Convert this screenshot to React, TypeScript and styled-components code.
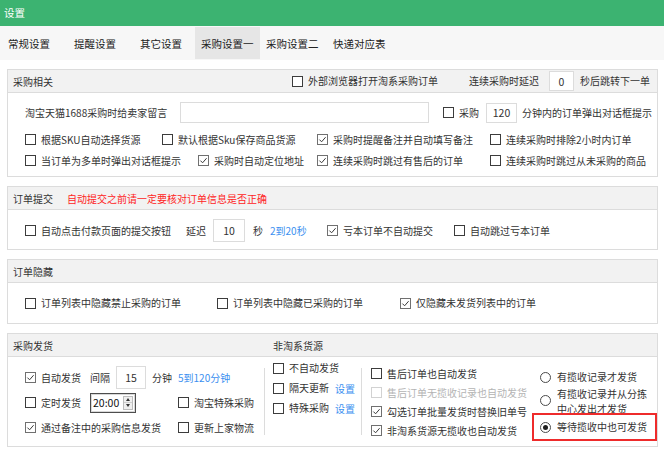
import React from 'react';
import styled, { createGlobalStyle } from 'styled-components';

const GlobalStyle = createGlobalStyle`
  html, body {
    margin: 0;
    padding: 0;
    background: #ffffff;
  }
  body {
    font-family: "Noto Sans CJK SC", "Microsoft YaHei", sans-serif;
    font-size: 10px;
    color: #333333;
  }
`;

const Window = styled.div`
  width: 664px;
  height: 449px;
  overflow: hidden;
  background: #ffffff;
  display: flex;
  flex-direction: column;
`;

const TitleBar = styled.div`
  height: 26px;
  flex: none;
  background: #3cb371;
  color: #ffffff;
  font-size: 10.5px;
  line-height: 26px;
  padding-left: 4px;
`;

const TabBar = styled.div`
  height: 34px;
  flex: none;
  background: #f7f7f7;
  display: flex;
  padding-left: 2px;
`;

const Tab = styled.div<{ $w: number; $active?: boolean }>`
  width: ${(p) => p.$w}px;
  box-sizing: border-box;
  padding-left: 6px;
  margin: 1px 0;
  display: flex;
  align-items: center;
  font-size: 10.5px;
  color: #222222;
  background: ${(p) => (p.$active ? '#e6e6e6' : 'transparent')};
`;

const Content = styled.div`
  display: flex;
  flex-direction: column;
  gap: 9px;
  padding: 9px 6px 0 7px;
`;

const Section = styled.div`
  border: 1px solid #dcdcdc;
  background: #ffffff;
`;

const Header = styled.div`
  height: 22px;
  background: #f2f2f2;
  border-bottom: 1px solid #dcdcdc;
  display: flex;
  align-items: center;
  padding-left: 5px;
  padding-right: 7px;
  color: #333333;
`;

const HeaderTitle = styled.span<{ $w?: number }>`
  width: ${(p) => (p.$w ? `${p.$w}px` : 'auto')};
  flex: none;
`;

const HeaderRight = styled.div`
  margin-left: auto;
  display: flex;
  align-items: center;
`;

const Warn = styled.span`
  color: #ff2424;
  margin-left: 14px;
`;

const Body = styled.div<{ $pt: number; $pb: number }>`
  display: flex;
  flex-direction: column;
  padding: ${(p) => p.$pt}px 0 ${(p) => p.$pb}px 17px;
`;

const Row = styled.div<{ $h: number; $mt?: number }>`
  height: ${(p) => p.$h}px;
  margin-top: ${(p) => p.$mt ?? 0}px;
  display: flex;
  align-items: center;
  white-space: nowrap;
`;

const Cell = styled.div<{ $w?: number; $ml?: number }>`
  width: ${(p) => (p.$w ? `${p.$w}px` : 'auto')};
  margin-left: ${(p) => p.$ml ?? 0}px;
  flex: none;
  display: flex;
  align-items: center;
  white-space: nowrap;
`;

const Label = styled.span<{ $ml?: number; $disabled?: boolean }>`
  margin-left: ${(p) => p.$ml ?? 0}px;
  color: ${(p) => (p.$disabled ? '#b4b4b4' : '#333333')};
  line-height: 14px;
`;

const LinkText = styled.span<{ $ml?: number }>`
  margin-left: ${(p) => p.$ml ?? 0}px;
  color: #3b8ff0;
`;

const Field = styled.input<{ $w: number; $h: number; $ml?: number }>`
  width: ${(p) => p.$w}px;
  height: ${(p) => p.$h}px;
  margin: 0 0 0 ${(p) => p.$ml ?? 0}px;
  padding: 0;
  box-sizing: border-box;
  border: 1px solid #dcdcdc;
  background: #ffffff;
  font-family: inherit;
  font-size: 10.5px;
  color: #333333;
  text-align: center;
  outline: none;
  flex: none;
`;

const BoxMark = styled.span<{ $checked?: boolean; $disabled?: boolean }>`
  width: 11px;
  height: 11px;
  flex: none;
  box-sizing: border-box;
  border: 1px solid
    ${(p) => (p.$disabled ? '#d2d2d2' : p.$checked ? '#707070' : '#3c3c3c')};
  background: #ffffff;
  display: inline-flex;
  align-items: center;
  justify-content: center;
`;

const RadioMark = styled.span<{ $checked?: boolean; $mt?: number }>`
  width: 11px;
  height: 11px;
  flex: none;
  box-sizing: border-box;
  border-radius: 50%;
  border: 1px solid #4a4a4a;
  background: #ffffff;
  margin-top: ${(p) => p.$mt ?? 0}px;
  display: inline-flex;
  align-items: center;
  justify-content: center;
  &::after {
    content: '';
    display: ${(p) => (p.$checked ? 'block' : 'none')};
    width: 5px;
    height: 5px;
    border-radius: 50%;
    background: #1e1e1e;
  }
`;

type CheckProps = {
  label: string;
  checked?: boolean;
  disabled?: boolean;
  w?: number;
  ml?: number;
  children?: React.ReactNode;
};

const Check: React.FC<CheckProps> = ({ label, checked, disabled, w, ml, children }) => (
  <Cell $w={w} $ml={ml}>
    <BoxMark $checked={checked} $disabled={disabled}>
      {checked && (
        <svg width="9" height="9" viewBox="0 0 9 9">
          <path d="M1.4 4.6 L3.6 6.8 L7.6 2.2" fill="none" stroke="#3a3a3a" strokeWidth="1" />
        </svg>
      )}
    </BoxMark>
    <Label $ml={5} $disabled={disabled}>
      {label}
    </Label>
    {children}
  </Cell>
);

/* 采购发货 columns */
const DeliveryBody = styled.div`
  height: 89px;
  display: flex;
  align-items: flex-start;
  padding-left: 17px;
`;

const Column = styled.div<{ $w?: number; $pt: number; $ml?: number }>`
  width: ${(p) => (p.$w ? `${p.$w}px` : 'auto')};
  flex: ${(p) => (p.$w ? 'none' : '1')};
  margin-left: ${(p) => p.$ml ?? 0}px;
  padding-top: ${(p) => p.$pt}px;
  display: flex;
  flex-direction: column;
`;

const Divider = styled.div<{ $ml: number }>`
  width: 1px;
  height: 67px;
  margin-top: 11px;
  margin-left: ${(p) => p.$ml}px;
  background: #dcdcdc;
  flex: none;
`;

const TimeBox = styled.div`
  width: 46px;
  height: 20px;
  box-sizing: border-box;
  border: 1px solid #4d4d4d;
  box-shadow: inset 0 0 0 1px #d8d8d8;
  display: flex;
  align-items: center;
  padding-left: 2px;
  font-size: 10.5px;
  color: #111111;
  flex: none;
`;

const Spin = styled.div`
  margin-left: auto;
  margin-right: 2px;
  width: 10px;
  height: 14px;
  display: flex;
  flex-direction: column;
  border: 1px solid #bdbdbd;
  background: #efefef;
  box-sizing: border-box;
`;

const SpinHalf = styled.div<{ $down?: boolean }>`
  flex: 1;
  display: flex;
  align-items: center;
  justify-content: center;
  border-top: ${(p) => (p.$down ? '1px solid #cfcfcf' : 'none')};
  &::after {
    content: '';
    border-left: 2.5px solid transparent;
    border-right: 2.5px solid transparent;
    ${(p) => (p.$down ? 'border-top: 3px solid #333;' : 'border-bottom: 3px solid #333;')}
  }
`;

const RadioRow = styled.div<{ $h: number }>`
  height: ${(p) => p.$h}px;
  display: flex;
  align-items: center;
`;

const RadioClip = styled.div`
  height: 26px;
  overflow: hidden;
  display: flex;
  align-items: flex-start;
`;

const WrapLabel = styled.span`
  width: 94px;
  margin-left: 6px;
  margin-top: -1px;
  line-height: 15px;
  color: #333333;
`;

const Highlight = styled.div`
  height: 28px;
  box-sizing: border-box;
  margin-left: -8px;
  padding-left: 6px;
  border: 2px solid #ee2b2b;
  display: flex;
  align-items: center;
`;

const tabs = [
  { name: '常规设置', w: 66 },
  { name: '提醒设置', w: 66 },
  { name: '其它设置', w: 61 },
  { name: '采购设置一', w: 65, active: true },
  { name: '采购设置二', w: 67 },
  { name: '快递对应表', w: 70 },
];

const App: React.FC = () => {
  return (
    <Window>
      <GlobalStyle />
      <TitleBar>设置</TitleBar>
      <TabBar>
        {tabs.map((t) => (
          <Tab key={t.name} $w={t.w} $active={t.active}>
            {t.name}
          </Tab>
        ))}
      </TabBar>

      <Content>
        <Section>
          <Header>
            <HeaderTitle>采购相关</HeaderTitle>
            <HeaderRight>
              <Check label="外部浏览器打开淘系采购订单" />
              <Label $ml={31}>连续采购时延迟</Label>
              <Field $w={25} $h={20} $ml={10} value="0" readOnly />
              <Label $ml={6}>秒后跳转下一单</Label>
            </HeaderRight>
          </Header>
          <Body $pt={9} $pb={5}>
            <Row $h={21}>
              <Cell $w={155}>
                <Label>淘宝天猫1688采购时给卖家留言</Label>
              </Cell>
              <Field $w={249} $h={21} value="" readOnly />
              <Check label="采购" ml={14} />
              <Field $w={31} $h={20} $ml={7} value="120" readOnly />
              <Label $ml={5}>分钟内的订单弹出对话框提示</Label>
            </Row>
            <Row $h={21} $mt={6}>
              <Check label="根据SKU自动选择货源" w={137} />
              <Check label="默认根据Sku保存商品货源" w={155} />
              <Check label="采购时提醒备注并自动填写备注" checked w={173} />
              <Check label="连续采购时排除2小时内订单" />
            </Row>
            <Row $h={21}>
              <Check label="当订单为多单时弹出对话框提示" w={173} />
              <Check label="采购时自动定位地址" checked w={119} />
              <Check label="连续采购时跳过有售后的订单" checked w={173} />
              <Check label="连续采购时跳过从未采购的商品" />
            </Row>
          </Body>
        </Section>

        <Section>
          <Header>
            <HeaderTitle>订单提交</HeaderTitle>
            <Warn>自动提交之前请一定要核对订单信息是否正确</Warn>
          </Header>
          <Body $pt={9} $pb={7}>
            <Row $h={23}>
              <Cell $w={302}>
                <Check label="自动点击付款页面的提交按钮" w={161} />
                <Label>延迟</Label>
                <Field $w={32} $h={23} $ml={7} value="10" readOnly />
                <Label $ml={8}>秒</Label>
                <LinkText $ml={7}>2到20秒</LinkText>
              </Cell>
              <Check label="亏本订单不自动提交" checked w={127} />
              <Check label="自动跳过亏本订单" />
            </Row>
          </Body>
        </Section>

        <Section>
          <Header>
            <HeaderTitle>订单隐藏</HeaderTitle>
          </Header>
          <Body $pt={10} $pb={10}>
            <Row $h={20}>
              <Check label="订单列表中隐藏禁止采购的订单" w={192} />
              <Check label="订单列表中隐藏已采购的订单" w={183} />
              <Check label="仅隐藏未发货列表中的订单" checked />
            </Row>
          </Body>
        </Section>

        <Section>
          <Header>
            <HeaderTitle $w={260}>采购发货</HeaderTitle>
            <HeaderTitle>非淘系货源</HeaderTitle>
          </Header>
          <DeliveryBody>
            <Column $w={233} $pt={8}>
              <Row $h={25}>
                <Check label="自动发货" checked w={65} />
                <Label>间隔</Label>
                <Field $w={30} $h={23} $ml={6} value="15" readOnly />
                <Label $ml={6}>分钟</Label>
                <LinkText $ml={6}>5到120分钟</LinkText>
              </Row>
              <Row $h={25}>
                <Cell $w={153}>
                  <Check label="定时发货" w={65} />
                  <TimeBox>
                    20:00
                    <Spin>
                      <SpinHalf />
                      <SpinHalf $down />
                    </Spin>
                  </TimeBox>
                </Cell>
                <Check label="淘宝特殊采购" />
              </Row>
              <Row $h={25}>
                <Check label="通过备注中的采购信息发货" checked w={153} />
                <Check label="更新上家物流" />
              </Row>
            </Column>

            <Divider $ml={6} />

            <Column $w={83} $ml={8} $pt={1}>
              <Row $h={20}>
                <Check label="不自动发货" />
              </Row>
              <Row $h={20}>
                <Check label="隔天更新">
                  <LinkText $ml={6}>设置</LinkText>
                </Check>
              </Row>
              <Row $h={20}>
                <Check label="特殊采购">
                  <LinkText $ml={6}>设置</LinkText>
                </Check>
              </Row>
            </Column>

            <Divider $ml={5} />

            <Column $w={160} $ml={9} $pt={7}>
              <Row $h={19}>
                <Check label="售后订单也自动发货" />
              </Row>
              <Row $h={19}>
                <Check label="售后订单无揽收记录也自动发货" disabled />
              </Row>
              <Row $h={19}>
                <Check label="勾选订单批量发货时替换旧单号" checked />
              </Row>
              <Row $h={19}>
                <Check label="非淘系货源无揽收也自动发货" checked />
              </Row>
            </Column>

            <Column $ml={9} $pt={10}>
              <RadioRow $h={20}>
                <RadioMark />
                <Label $ml={6}>有揽收记录才发货</Label>
              </RadioRow>
              <RadioClip>
                <RadioMark $mt={8} />
                <WrapLabel>有揽收记录并从分拣中心发出才发货</WrapLabel>
              </RadioClip>
              <Highlight>
                <RadioMark $checked />
                <Label $ml={6}>等待揽收中也可发货</Label>
              </Highlight>
            </Column>
          </DeliveryBody>
        </Section>
      </Content>
    </Window>
  );
};

export default App;
